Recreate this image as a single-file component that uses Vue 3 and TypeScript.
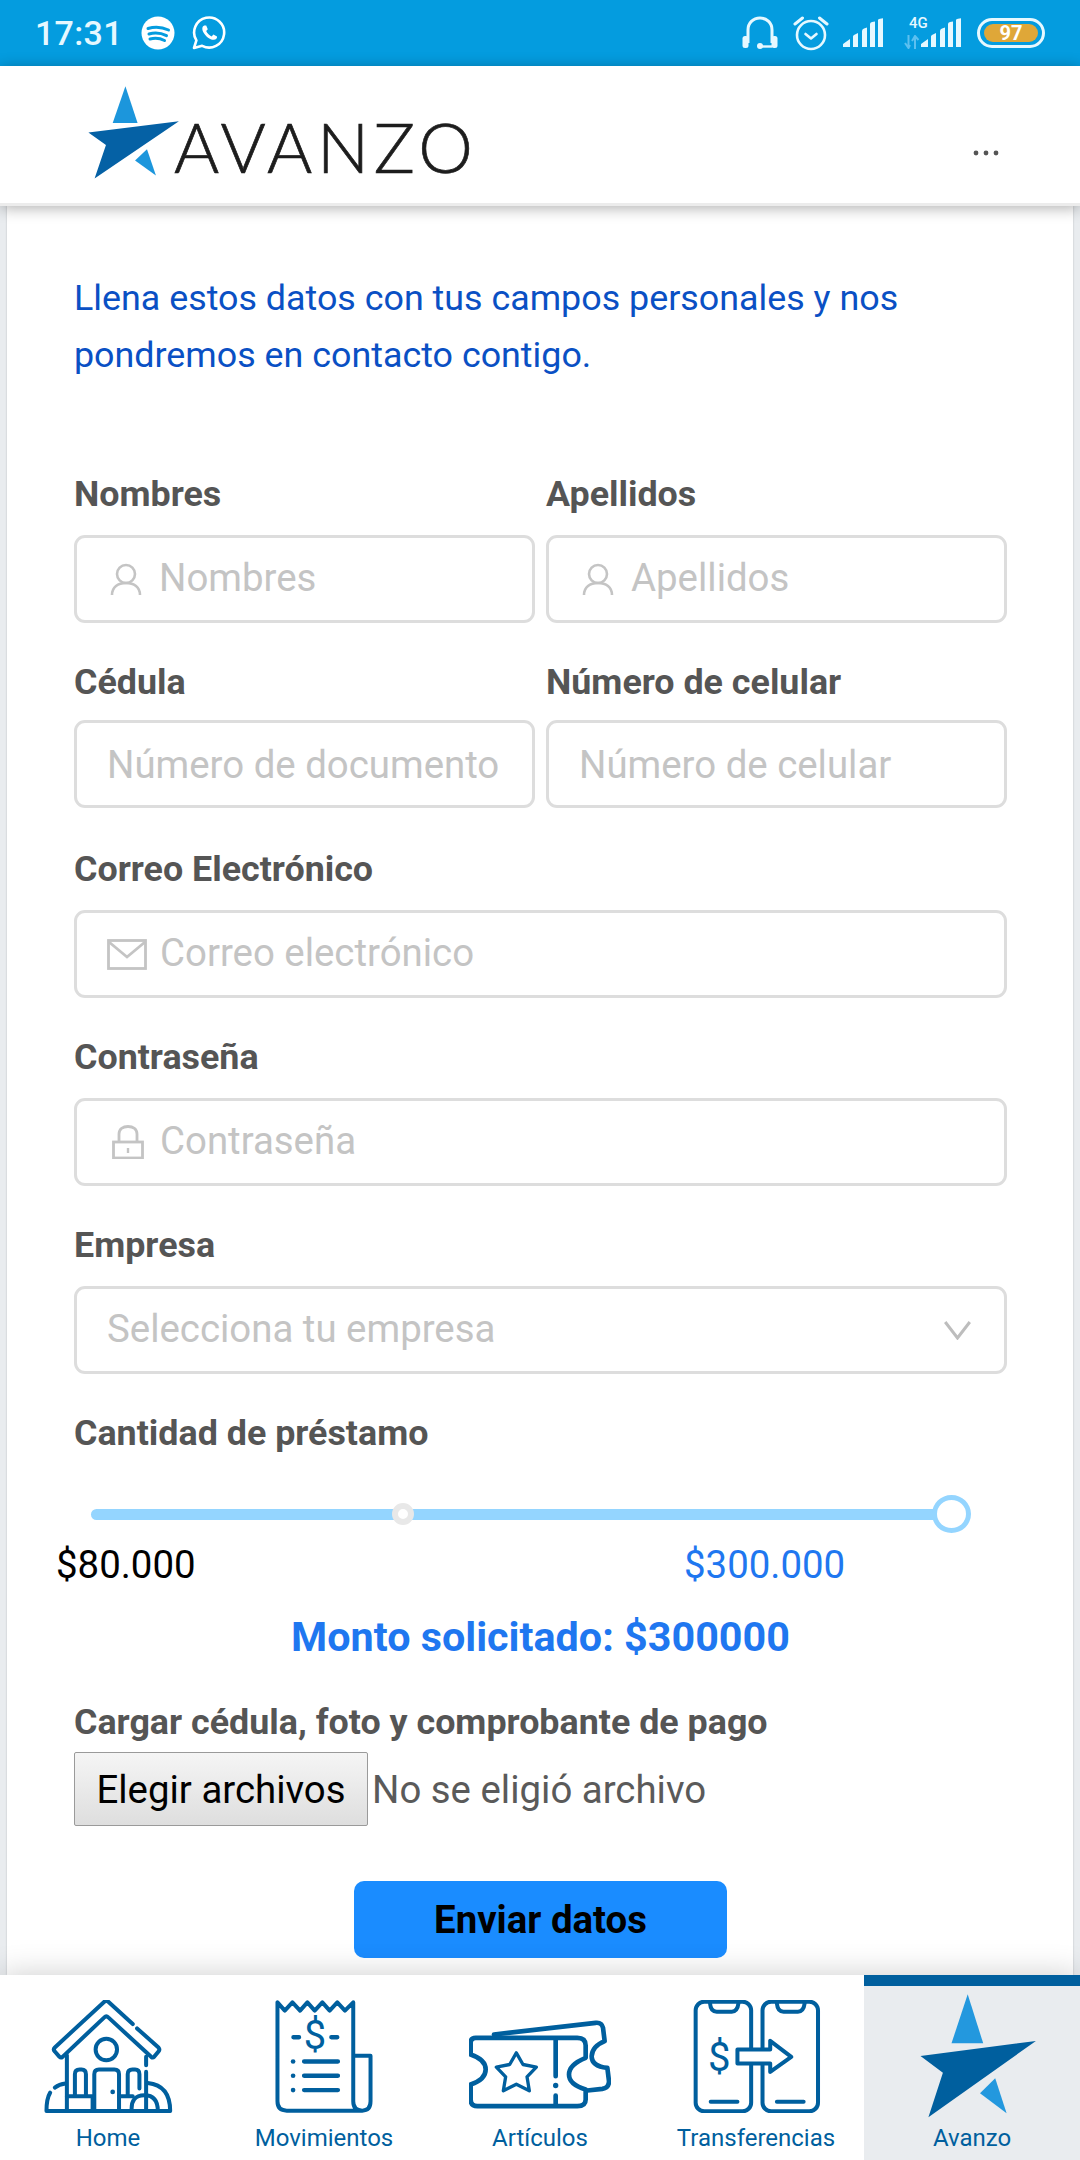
<script setup lang="ts">
type Field = { label: string; placeholder: string; icon?: string }
const firstRow: Field[] = [
  { label: 'Nombres', placeholder: 'Nombres', icon: 'user' },
  { label: 'Apellidos', placeholder: 'Apellidos', icon: 'user' },
]
const secondRow: Field[] = [
  { label: 'Cédula', placeholder: 'Número de documento' },
  { label: 'Número de celular', placeholder: 'Número de celular' },
]
const wideRows: Field[] = [
  { label: 'Correo Electrónico', placeholder: 'Correo electrónico', icon: 'mail' },
  { label: 'Contraseña', placeholder: 'Contraseña', icon: 'lock' },
]
</script>

<template>
  <div class="app">
    <div class="status">
      <span class="time">17:31</span>
      <svg class="spotify" width="34" height="34" viewBox="0 0 34 34">
        <circle cx="17" cy="17" r="16.5" fill="#fff" />
        <path d="M7 12.5C14 10.5 21 11 27.5 14M8 18C14 16.4 20 17 25.5 19.6M9 23C14 21.8 19 22.2 23.5 24.5" fill="none" stroke="#049cdf" stroke-width="3" stroke-linecap="round" />
      </svg>
      <svg class="whatsapp" width="34" height="34" viewBox="0 0 34 34">
        <path d="M2 32L4.4 24.4A15 15 0 1 1 10.2 29.8Z" fill="none" stroke="#fff" stroke-width="2.6" stroke-linejoin="round" />
        <path d="M12.2 9.5C10 10.5 9.6 13.4 11.8 17C14 20.6 18 24 21.8 23.8C24 23.6 25.4 22 25 20.4L21.4 18.6L19.6 20.4C17.6 19.6 15.2 17.2 14.2 15L15.8 13.2L14.2 9.6Z" fill="#fff" />
      </svg>
      <span class="spacer"></span>
      <svg width="36" height="34" viewBox="0 0 36 34" class="headset">
        <path d="M6 27V14C6 7 11 2 18 2C25 2 30 7 30 14V27" fill="none" stroke="#e6f8ff" stroke-width="3" />
        <rect x="0.5" y="20" width="6" height="12" rx="2.5" fill="#e6f8ff" />
        <rect x="29.5" y="20" width="6" height="12" rx="2.5" fill="#e6f8ff" />
        <circle cx="18" cy="30" r="3" fill="#e6f8ff" />
        <path d="M18 30.5H30" stroke="#e6f8ff" stroke-width="2.4" />
      </svg>
      <svg width="36" height="36" viewBox="0 0 36 36" class="alarm">
        <circle cx="18" cy="20" r="14" fill="none" stroke="#e6f8ff" stroke-width="2.6" />
        <path d="M12.5 19L18 23.5L23.5 19" fill="none" stroke="#e6f8ff" stroke-width="2.6" stroke-linecap="round" stroke-linejoin="round" />
        <path d="M2 9L9.5 3M34 9L26.5 3" fill="none" stroke="#e6f8ff" stroke-width="3" stroke-linecap="round" />
      </svg>
      <svg width="40" height="30" viewBox="0 0 40 30" class="signal-a">
        <path d="M0 29V26L7 21V29ZM10 29V18.5Q10 17.5 11 17L15 15V29ZM19 29V13Q19 11 21 10.5L24 9.5V29ZM27 29V6Q27 4.5 29 4L32 3.5V29ZM35 29V2Q35 1 37 0.7L40 0.3V29Z" fill="#e6f8ff" />
      </svg>
      <span class="net">
        <span class="net-label">4G</span>
        <svg width="16" height="14" viewBox="0 0 16 14" class="net-arrows">
          <path d="M4.5 0V12M1 8L4.5 13L6 10M11 14V2M8 6L11 1L14.5 5" fill="none" stroke="#5cc0f0" stroke-width="2" />
        </svg>
      </span>
      <svg width="40" height="30" viewBox="0 0 40 30" class="signal-b">
        <path d="M0 29V26L7 21V29ZM10 29V18.5Q10 17.5 11 17L15 15V29ZM19 29V13Q19 11 21 10.5L24 9.5V29ZM27 29V6Q27 4.5 29 4L32 3.5V29ZM35 29V2Q35 1 37 0.7L40 0.3V29Z" fill="#e6f8ff" />
      </svg>
      <span class="battery"><span class="battery-fill">97</span></span>
    </div>

    <header class="header">
      <svg class="logo-star" width="91" height="93" viewBox="920 1994 116 124" preserveAspectRatio="none">
        <path d="M967.7 1994.3L951.5 2043.3H983.2Z" fill="#1c96dc" />
        <path d="M1035.9 2041L920.5 2056L942.9 2072.7L928.4 2117.3Z" fill="#0561a5" />
        <path d="M995.2 2078.3L980 2093.3L1006.6 2113.3Z" fill="#1c96dc" />
      </svg>
      <span class="brand">AVANZO</span>
      <svg class="more" width="26" height="6" viewBox="0 0 26 6">
        <circle cx="3" cy="3" r="2.4" fill="#555" />
        <circle cx="13" cy="3" r="2.4" fill="#555" />
        <circle cx="23" cy="3" r="2.4" fill="#555" />
      </svg>
    </header>

    <main class="main">
      <form class="card" @submit.prevent>
        <p class="intro">Llena estos datos con tus campos personales y nos pondremos en contacto contigo.</p>

        <div class="row row-one">
          <div v-for="f in firstRow" :key="f.label" class="field">
            <label class="label">{{ f.label }}</label>
            <div class="control">
              <svg class="ico-user" width="32" height="32" viewBox="0 0 32 32">
                <circle cx="16" cy="11" r="9" fill="none" stroke="#c4c4c4" stroke-width="2.6" />
                <path d="M2 32C2 24 8 20 16 20C24 20 30 24 30 32" fill="none" stroke="#c4c4c4" stroke-width="2.6" />
              </svg>
              <input class="input with-icon" type="text" :placeholder="f.placeholder" />
            </div>
          </div>
        </div>

        <div class="row row-two">
          <div v-for="f in secondRow" :key="f.label" class="field">
            <label class="label">{{ f.label }}</label>
            <div class="control"><input class="input" type="text" :placeholder="f.placeholder" /></div>
          </div>
        </div>

        <div v-for="f in wideRows" :key="f.label" class="wide" :class="f.icon === 'mail' ? 'wide-mail' : 'wide-lock'">
          <label class="label">{{ f.label }}</label>
          <div class="control">
            <svg v-if="f.icon === 'mail'" class="ico-mail" width="40" height="31" viewBox="0 0 40 31">
              <rect x="1.5" y="1.5" width="37" height="28" fill="none" stroke="#c4c4c4" stroke-width="2.8" />
              <path d="M2 3L20 18L38 3" fill="none" stroke="#c4c4c4" stroke-width="2.8" />
            </svg>
            <svg v-else class="ico-lock" width="32" height="34" viewBox="0 0 32 34">
              <rect x="1.5" y="17" width="29" height="16" fill="none" stroke="#c4c4c4" stroke-width="2.8" />
              <path d="M7 17V9C7 4 11 1.5 16 1.5C21 1.5 25 4 25 9V17" fill="none" stroke="#c4c4c4" stroke-width="2.8" />
              <path d="M16 23V28" stroke="#c4c4c4" stroke-width="2.4" />
            </svg>
            <input class="input with-icon" :type="f.icon === 'lock' ? 'password' : 'email'" :placeholder="f.placeholder" />
          </div>
        </div>

        <div class="wide wide-select">
          <label class="label">Empresa</label>
          <div class="control">
            <span class="select-text">Selecciona tu empresa</span>
            <svg class="chevron" width="27" height="19" viewBox="0 0 27 19">
              <path d="M1.2 1L13.5 17L25.8 1" fill="none" stroke="#bdbdbd" stroke-width="3" />
            </svg>
          </div>
        </div>

        <label class="label">Cantidad de préstamo</label>
        <div class="slider">
          <span class="track"></span>
          <span class="thumb-mid"></span>
          <span class="thumb-end"></span>
        </div>
        <div class="range">
          <span class="range-min">$80.000</span>
          <span class="range-max">$300.000</span>
        </div>
        <p class="amount">Monto solicitado: $300000</p>

        <label class="label upload-label">Cargar cédula, foto y comprobante de pago</label>
        <div class="upload">
          <button class="choose" type="button">Elegir archivos</button>
          <span class="nofile">No se eligió archivo</span>
        </div>
        <button class="send" type="submit">Enviar datos</button>
      </form>
    </main>

    <nav class="nav">
      <a class="tab">
        <svg width="131" height="113" viewBox="122 120 381 338" class="tab-ico home">
          <g fill="none" stroke="#005f9e" stroke-width="12" stroke-linecap="round" stroke-linejoin="round">
            <path d="M385 192L312 125Q306 120 300 125L152 262Q146 268 152 274L166 290Q170 294 175 290L300 172Q306 166 312 172L440 290Q445 294 449 290L462 274Q467 268 462 262L398 205" />
            <path d="M188 285V452M425 290V315M425 335V452" />
            <circle cx="306" cy="268" r="32" />
            <path d="M212 405V342Q212 328 226 328H232Q245 328 245 342V405M370 405V342Q370 328 384 328H392Q405 328 405 342V385" />
            <path d="M270 452V342Q270 328 284 328H330Q344 328 344 342V452" />
            <path d="M188 408H265V452M344 408H385" />
            <path d="M127 452H498" stroke-linecap="butt" />
            <path d="M127 452Q127 415 138 397M152 382Q165 372 184 370M430 368Q497 375 497 452" />
            <path d="M382 452Q378 405 420 405Q460 405 460 452" />
          </g>
          <circle cx="325" cy="395" r="7" fill="#005f9e" />
        </svg>
        <span>Home</span>
      </a>
      <a class="tab">
        <svg width="100" height="113" viewBox="795 120 290 340" class="tab-ico receipt">
          <g fill="none" stroke="#005f9e" stroke-width="12" stroke-linecap="round" stroke-linejoin="round">
            <path d="M1028 425V127L1003 152L980 127L957 152L935 127L912 152L890 127L868 152L845 127L822 152L800 127V425Q800 453 828 453H1055Q1080 453 1080 425V288H1030M1028 425Q1028 453 1055 453" />
            <path d="M848 232H865M962 232H980M880 305H982M880 348H982M880 391H982" stroke-width="13" />
          </g>
          <text x="913" y="266" text-anchor="middle" class="icon-dollar">$</text>
          <circle cx="847" cy="305" r="7" fill="#005f9e" />
          <circle cx="847" cy="348" r="7" fill="#005f9e" />
          <circle cx="847" cy="391" r="7" fill="#005f9e" />
        </svg>
        <span>Movimientos</span>
      </a>
      <a class="tab">
        <svg width="142" height="91" viewBox="30 32 426 272" class="tab-ico ticket">
          <g fill="none" stroke="#005f9e" stroke-width="14" stroke-linecap="round" stroke-linejoin="round">
            <path d="M105 75L410 40Q428 38 432 55L437 95Q400 110 398 140Q398 170 445 175L450 215Q450 235 430 238L385 243" />
            <path d="M50 85H355Q380 85 380 108V145Q330 165 330 195Q330 225 380 240V270Q380 290 355 290H55Q35 290 35 270V225Q80 210 80 180Q80 150 35 135V100Q35 85 50 85Z" />
            <path d="M290 90V200M290 258V288" />
            <path d="M172 130L192 165L232 173L204 202L211 244L172 224L133 244L140 202L112 173L152 165Z" stroke-width="10" />
          </g>
          <circle cx="290" cy="228" r="8" fill="#005f9e" />
        </svg>
        <span>Artículos</span>
      </a>
      <a class="tab">
        <svg width="130" height="113" viewBox="443 120 375 338" class="tab-ico phones">
          <g fill="none" stroke="#005f9e" stroke-width="12" stroke-linecap="round" stroke-linejoin="round">
            <rect x="447" y="125" width="166" height="328" rx="26" />
            <rect x="647" y="125" width="166" height="328" rx="26" />
            <path d="M490 130Q492 155 510 155H555Q572 155 575 130M690 130Q692 155 710 155H753Q770 155 773 130M492 424H572M690 424H770" />
            <path d="M670 268H572V310H670V335L733 290L670 242Z" fill="#fff" />
          </g>
          <text x="518" y="331" text-anchor="middle" class="icon-dollar">$</text>
        </svg>
        <span>Transferencias</span>
      </a>
      <a class="tab active">
        <svg width="116" height="124" viewBox="920 1994 116 124" class="tab-ico star">
          <path d="M967.7 1994.3L951.5 2043.3H983.2Z" fill="#2398de" />
          <path d="M1035.9 2041L920.5 2056L942.9 2072.7L928.4 2117.3Z" fill="#005f9e" />
          <path d="M995.2 2078.3L980 2093.3L1006.6 2113.3Z" fill="#2398de" />
        </svg>
        <span>Avanzo</span>
      </a>
    </nav>
  </div>
</template>

<style scoped>
.app {
  width: 1080px;
  height: 2160px;
  display: flex;
  flex-direction: column;
  overflow: hidden;
  font-family: Roboto, "Liberation Sans", sans-serif;
  background: #fff;
}
.status {
  height: 66px;
  flex: none;
  background: #049cdf;
  display: flex;
  align-items: center;
  padding: 0 35px;
  color: #e6f8ff;
}
.time { font-size: 34px; font-weight: 500; width: 106px; letter-spacing: 0.3px; }
.spotify { margin-right: 17px; }
.spacer { flex: 1; }
.headset { margin-right: 15px; }
.alarm { margin-right: 14px; }
.signal-a { margin-right: 21px; }
.net { position: relative; width: 17px; height: 30px; }
.net-label { position: absolute; left: 5px; top: -4px; font-size: 15px; font-weight: 500; }
.net-arrows { position: absolute; left: 0; top: 17px; }
.signal-b { margin-right: 16px; }
.battery {
  width: 68px;
  height: 30px;
  box-sizing: border-box;
  border: 3px solid #e6f8ff;
  border-radius: 15px;
  padding: 3px 4px;
  display: flex;
}
.battery-fill {
  flex: 1;
  background: #dfa738;
  border-radius: 9px;
  color: #fff;
  font-size: 20px;
  line-height: 18px;
  font-weight: 700;
  text-align: center;
}
.header {
  height: 137px;
  flex: none;
  background: #fff;
  display: flex;
  align-items: flex-start;
  padding-left: 88px;
  border-bottom: 3px solid #ececec;
  position: relative;
  z-index: 2;
  box-shadow: 0 2px 14px rgba(0, 0, 0, 0.32);
}
.logo-star { margin-top: 20px; flex: none; }
.brand {
  margin-left: -5px;
  margin-top: 46px;
  font-family: Lato, sans-serif;
  font-weight: 300;
  font-size: 69px;
  line-height: 70px;
  letter-spacing: 4.7px;
  -webkit-text-stroke: 0.7px #1d1d1d;
  color: #1d1d1d;
}
.more { margin-left: auto; margin-right: 81px; margin-top: 84px; }
.main {
  flex: 1;
  min-height: 0;
  background: #e9ecef;
  padding: 0 7px;
  overflow: hidden;
}
.card {
  background: #fff;
  height: 100%;
  box-sizing: border-box;
  padding: 64px 66px 0 67px;
  box-shadow: 0 0 2px rgba(0, 0, 0, 0.2);
}
.intro {
  margin: 0 0 90px;
  font-size: 35.84px;
  line-height: 57px;
  color: #0a50c4;
}
.row { display: grid; grid-template-columns: 461px 461px; gap: 11px; }
.row-one { margin-bottom: 39px; }
.row-two { margin-bottom: 41px; }
.row-two .label { margin-bottom: 18px; }
.wide-mail { margin-bottom: 39px; }
.wide-lock { margin-bottom: 39px; }
.wide-select { margin-bottom: 39px; }
.label {
  display: block;
  font-size: 35.84px;
  line-height: 40px;
  font-weight: 700;
  color: #555;
  margin-bottom: 21px;
}
.control {
  height: 88px;
  box-sizing: border-box;
  border: 3px solid #ddd;
  border-radius: 11px;
  display: flex;
  align-items: center;
  padding-left: 30px;
  background: #fff;
}
.input {
  flex: 1;
  min-width: 0;
  border: 0;
  outline: 0;
  padding: 0;
  background: transparent;
  font-family: inherit;
  font-size: 38.4px;
  color: #555;
}
.input.with-icon { margin-bottom: 3px; }
.input::placeholder { color: #c4c4c4; opacity: 1; }
.ico-user, .ico-lock, .ico-mail { flex: none; }
.ico-user { margin-left: 3px; margin-right: 17px; }
.ico-mail { margin-right: 13px; }
.ico-lock { margin-left: 5px; margin-right: 16px; }
.select-text { flex: 1; font-size: 38.4px; color: #c4c4c4; margin-bottom: 3px; }
.chevron { margin-right: 33px; }
.slider {
  position: relative;
  height: 38px;
  margin: 42px 0 11px;
}
.track {
  position: absolute;
  left: 17px;
  width: 850px;
  top: 14px;
  height: 11px;
  border-radius: 6px;
  background: #94d5ff;
}
.thumb-mid {
  position: absolute;
  left: 318px;
  top: 8px;
  width: 22px;
  height: 22px;
  box-sizing: border-box;
  border: 6px solid #e8e8e8;
  border-radius: 50%;
  background: #fff;
}
.thumb-end {
  position: absolute;
  left: 858px;
  top: 0;
  width: 39px;
  height: 38px;
  box-sizing: border-box;
  border: 5px solid #94d5ff;
  border-radius: 50%;
  background: #fff;
}
.range {
  display: flex;
  margin-left: -18px;
  font-size: 38.4px;
  line-height: 42px;
  margin-bottom: 27px;
}
.range-min { width: 628px; color: #000; }
.range-max { color: #1f77f0; }
.amount {
  margin: 0 0 41px;
  text-align: center;
  font-size: 41.3px;
  line-height: 48px;
  font-weight: 700;
  color: #1f77f0;
}
.upload-label { margin-bottom: 10px; }
.upload { display: flex; align-items: center; margin-bottom: 55px; }
.choose {
  width: 294px;
  height: 74px;
  box-sizing: border-box;
  border: 1px solid #9a9a9a;
  border-radius: 2px;
  background: linear-gradient(#f5f5f5, #dedede);
  font-family: inherit;
  font-size: 38.4px;
  color: #000;
  padding: 0;
  margin-right: 4px;
}
.nofile { font-size: 38.4px; color: #5a5a5a; }
.send {
  display: block;
  margin: 0 auto;
  width: 373px;
  height: 77px;
  border: 0;
  border-radius: 10px;
  background: #1a8cff;
  font-family: inherit;
  font-size: 38.4px;
  font-weight: 700;
  color: #000;
  padding: 0;
}
.nav {
  height: 185px;
  flex: none;
  display: grid;
  grid-template-columns: repeat(5, 216px);
  background: #fff;
  position: relative;
  z-index: 2;
  box-shadow: 0 0 30px rgba(0, 0, 0, 0.2);
}
.tab {
  display: flex;
  flex-direction: column;
  align-items: center;
  justify-content: flex-end;
  padding-bottom: 8px;
  box-sizing: border-box;
  color: #005f9e;
  font-size: 24px;
  line-height: 28px;
  position: relative;
}
.tab-ico { display: block; margin-bottom: 11px; }
.ticket { margin-bottom: 13px; }
.phones { margin-left: 2px; }
.active {
  background: #e9ecef;
  border-top: 11px solid #005f9e;
}
.active .tab-ico { margin-bottom: 6px; margin-left: 12px; }
.icon-dollar {
  font-family: Roboto, sans-serif;
  font-size: 120px;
  fill: #005f9e;
}
</style>

<style>
html, body { margin: 0; padding: 0; background: #fff; }
</style>
